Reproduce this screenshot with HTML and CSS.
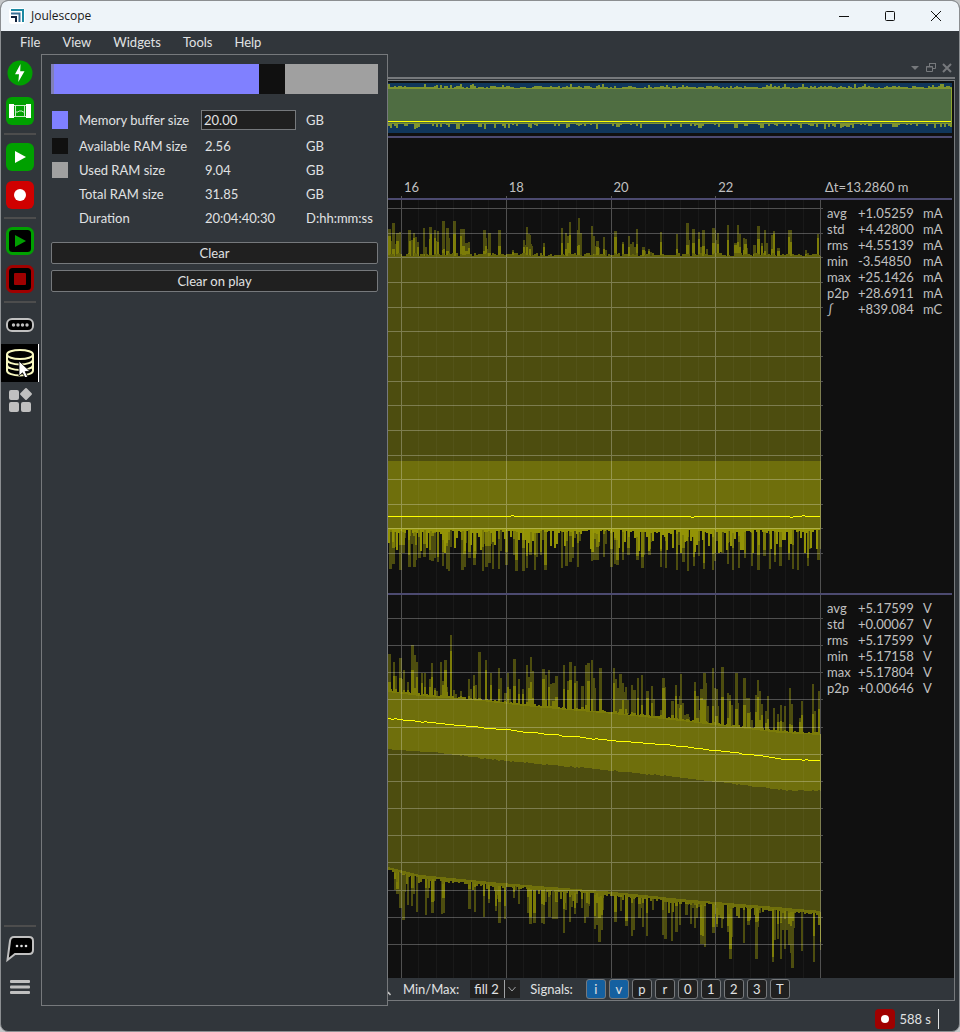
FILE: index.html
```
<!DOCTYPE html>
<html lang="en">

<head>
    <meta charset="UTF-8">
    <meta name="viewport" content="width=device-width, initial-scale=1.0">
    <title>Joulescope</title>
    <link rel="stylesheet" href="styles.css">
</head>

<body>
    <div class="window">
        <header class="title-bar">
            <svg class="logo" viewBox="0 0 16 16">
                <rect width="16" height="16" rx="3" fill="#fff" />
                <path d="M2 2h12v12" fill="none" stroke="#1d89a3" stroke-width="2" />
                <path d="M2 5.5h8.5V14" fill="none" stroke="#3a6f95" stroke-width="2" />
                <path d="M2 9h5v5" fill="none" stroke="#10203c" stroke-width="2" />
            </svg>
            <span class="app-name">Joulescope</span>
            <div class="window-btns">
                <button type="button" aria-label="Minimize"><svg viewBox="0 0 12 12"><path d="M1 6.5h10" /></svg></button>
                <button type="button" aria-label="Maximize"><svg viewBox="0 0 12 12"><rect x="1.5" y="1.5" width="9" height="9" rx="1" /></svg></button>
                <button type="button" aria-label="Close"><svg viewBox="0 0 12 12"><path d="M1 1l10 10M11 1L1 11" /></svg></button>
            </div>
        </header>

        <nav class="menu-bar">
            <button type="button">File</button>
            <button type="button">View</button>
            <button type="button">Widgets</button>
            <button type="button">Tools</button>
            <button type="button">Help</button>
        </nav>

        <main class="main">
            <nav class="side-bar">
                <button type="button" class="side-btn" aria-label="Target power">
                    <svg viewBox="0 0 28 28">
                        <circle cx="14" cy="14" r="12.5" fill="#00a000" />
                        <path d="M14.5 5L9 15.2h4L12.3 23 18.5 12.2h-4.3z" fill="#fff" />
                    </svg>
                </button>
                <button type="button" class="side-btn" aria-label="Current range">
                    <svg viewBox="0 0 28 28">
                        <rect width="28" height="28" rx="6" fill="#00a000" />
                        <path d="M3 7h5v14H3zM20 7h5v14h-5z" fill="#fff" />
                        <path d="M8 8.500h12M8 19.500h12M9.500 8v12M18.500 8v12M10 15h2l1-1h3l1 1h2" fill="none" stroke="#c4e8c4" />
                    </svg>
                </button>
                <hr>
                <button type="button" class="side-btn" aria-label="Play">
                    <svg viewBox="0 0 28 28">
                        <rect width="28" height="28" rx="6" fill="#00a000" />
                        <path d="M9 8l11 6-11 6z" fill="#fff" />
                    </svg>
                </button>
                <button type="button" class="side-btn" aria-label="Record">
                    <svg viewBox="0 0 28 28">
                        <rect width="28" height="28" rx="6" fill="#d00000" />
                        <circle cx="14" cy="14" r="6" fill="#fff" />
                    </svg>
                </button>
                <hr>
                <button type="button" class="side-btn" aria-label="Accumulate">
                    <svg viewBox="0 0 28 28">
                        <rect x="1.5" y="1.5" width="25" height="25" rx="5" fill="#000" stroke="#00a000" stroke-width="3" />
                        <path d="M9 8l11 6-11 6z" fill="#00a000" />
                    </svg>
                </button>
                <button type="button" class="side-btn" aria-label="Record statistics">
                    <svg viewBox="0 0 28 28">
                        <rect x="1.5" y="1.5" width="25" height="25" rx="5" fill="#000" stroke="#a00000" stroke-width="3" />
                        <rect x="8" y="8" width="12" height="12" rx="1" fill="#a00000" />
                    </svg>
                </button>
                <hr>
                <button type="button" class="side-btn" aria-label="Device">
                    <svg viewBox="0 0 28 28">
                        <rect x="1" y="8" width="26" height="12" rx="5" fill="#000" stroke="#c0c0c0" stroke-width="2" />
                        <g fill="#c0c0c0">
                            <circle cx="7.5" cy="14" r="1.7" />
                            <circle cx="12" cy="14" r="1.7" />
                            <circle cx="16.5" cy="14" r="1.7" />
                            <circle cx="21" cy="14" r="1.7" />
                        </g>
                    </svg>
                </button>
                <button type="button" class="side-btn active" aria-label="Memory">
                    <svg viewBox="0 0 28 28">
                        <g fill="none" stroke="#f8f8c0" stroke-width="2">
                            <ellipse cx="14" cy="5.5" rx="13" ry="4.5" />
                            <path d="M1 5.500v16c0 6.500 26 6.500 26 0v-16M1 10.500c0 6.500 26 6.500 26 0M1 16c0 6.500 26 6.500 26 0" />
                        </g>
                        <path d="M13 12v15l3.5-3.2 2.6 5.2 2.6-1.2-2.5-5.2 4.6-.4z" fill="#fff" stroke="#000" stroke-width=".8" />
                    </svg>
                </button>
                <button type="button" class="side-btn" aria-label="Widgets">
                    <svg viewBox="0 0 28 28" fill="#c0c0c0">
                        <rect x="3" y="3" width="10" height="10" rx="2" />
                        <rect x="3" y="15" width="10" height="10" rx="2" />
                        <rect x="15" y="15" width="10" height="10" rx="2" />
                        <rect x="15.5" y="2.5" width="9" height="9" rx="1" transform="rotate(45 20 7)" />
                    </svg>
                </button>
                <hr class="push">
                <button type="button" class="side-btn" aria-label="Help">
                    <svg viewBox="0 0 28 28">
                        <path d="M8 2h15q4 0 4 4v9q0 4-4 4H9l-7.500 6L4 6q.5-4 4-4z" fill="#000" stroke="#c0c0c0" stroke-width="2" />
                        <g fill="#e0e0e0">
                            <circle cx="11" cy="11" r="1.3" />
                            <circle cx="15.5" cy="11" r="1.3" />
                            <circle cx="20" cy="11" r="1.3" />
                        </g>
                    </svg>
                </button>
                <button type="button" class="side-btn" aria-label="Settings">
                    <svg viewBox="0 0 28 28" fill="#c0c0c0">
                        <rect x="4" y="7" width="20" height="3" rx="1" />
                        <rect x="4" y="12.5" width="20" height="3" rx="1" />
                        <rect x="4" y="18" width="20" height="3" rx="1" />
                    </svg>
                </button>
            </nav>

            <section class="memory-panel">
                <div class="memory-bar">
                    <div class="part buffer"></div>
                    <div class="part available"></div>
                    <div class="part used"></div>
                </div>
                <div class="memory-grid">
                    <i class="swatch buffer"></i>
                    <label for="buffer-size">Memory buffer size</label>
                    <input type="text" id="buffer-size" value="20.00">
                    <span>GB</span>

                    <i class="swatch available"></i>
                    <span>Available RAM size</span>
                    <span class="value">2.56</span>
                    <span>GB</span>

                    <i class="swatch used"></i>
                    <span>Used RAM size</span>
                    <span class="value">9.04</span>
                    <span>GB</span>

                    <i></i>
                    <span>Total RAM size</span>
                    <span class="value">31.85</span>
                    <span>GB</span>

                    <i></i>
                    <span>Duration</span>
                    <span class="value">20:04:40:30</span>
                    <span>D:hh:mm:ss</span>
                </div>
                <button type="button" class="wide-btn">Clear</button>
                <button type="button" class="wide-btn">Clear on play</button>
            </section>

            <section class="dock">
                <div class="dock-title">
                    <button type="button" aria-label="Dock menu"><svg viewBox="0 0 12 12"><path d="M2 4h8L6 8z" fill="#76797c" /></svg></button>
                    <button type="button" aria-label="Detach"><svg viewBox="0 0 12 12"><path d="M4.5 4V1.500h6v5H8M4 1.500h7M1.500 4.500h6v5h-6zM1 5h7" fill="none" stroke="#76797c" /></svg></button>
                    <button type="button" aria-label="Close dock"><svg viewBox="0 0 12 12"><path d="M2 2l8 8M10 2l-8 8" fill="none" stroke="#76797c" stroke-width="2" /></svg></button>
                </div>
                <div class="dock-body">
                    <div class="chart">
                        <svg class="overview" id="overview" viewBox="0 0 564 50" preserveAspectRatio="none"></svg>
                        <div class="chart-row axis">
                            <div class="ticks">
                                <span>16</span>
                                <span>18</span>
                                <span>20</span>
                                <span>22</span>
                            </div>
                            <div class="delta">Δt=13.2860 m</div>
                        </div>
                        <div class="chart-row current">
                            <svg class="plot" id="current" viewBox="0 0 435 393" preserveAspectRatio="none"></svg>
                            <table class="stats">
                                <tr><th>avg</th><td>+1.05259</td><td>mA</td></tr>
                                <tr><th>std</th><td>+4.42800</td><td>mA</td></tr>
                                <tr><th>rms</th><td>+4.55139</td><td>mA</td></tr>
                                <tr><th>min</th><td>-3.54850</td><td>mA</td></tr>
                                <tr><th>max</th><td>+25.1426</td><td>mA</td></tr>
                                <tr><th>p2p</th><td>+28.6911</td><td>mA</td></tr>
                                <tr><th>∫</th><td>+839.084</td><td>mC</td></tr>
                            </table>
                        </div>
                        <div class="chart-row voltage">
                            <svg class="plot" id="voltage" viewBox="0 0 435 382" preserveAspectRatio="none"></svg>
                            <table class="stats">
                                <tr><th>avg</th><td>+5.17599</td><td>V</td></tr>
                                <tr><th>std</th><td>+0.00067</td><td>V</td></tr>
                                <tr><th>rms</th><td>+5.17599</td><td>V</td></tr>
                                <tr><th>min</th><td>+5.17158</td><td>V</td></tr>
                                <tr><th>max</th><td>+5.17804</td><td>V</td></tr>
                                <tr><th>p2p</th><td>+0.00646</td><td>V</td></tr>
                            </table>
                        </div>
                    </div>
                    <div class="plot-tools">
                        <svg class="zoom-tail" viewBox="0 0 4 20"><path d="M0 13l2.500 3" stroke="#c0c0c0" stroke-width="1.5" /></svg>
                        <label for="min-max">Min/Max:</label>
                        <div class="select-box">
                            <select id="min-max">
                                <option>off</option>
                                <option>lines</option>
                                <option>fill 1</option>
                                <option selected>fill 2</option>
                            </select>
                            <svg viewBox="0 0 16 18"><path d="M.5 0v18" /><path d="M4.500 7l3.500 4 3.500-4" /></svg>
                        </div>
                        <span>Signals:</span>
                        <div class="signals">
                            <button type="button" class="on">i</button>
                            <button type="button" class="on">v</button>
                            <button type="button">p</button>
                            <button type="button">r</button>
                            <button type="button">0</button>
                            <button type="button">1</button>
                            <button type="button">2</button>
                            <button type="button">3</button>
                            <button type="button">T</button>
                        </div>
                    </div>
                </div>
            </section>
        </main>

        <footer class="status-bar">
            <svg viewBox="0 0 20 20">
                <rect width="20" height="20" rx="4" fill="#a00000" />
                <circle cx="10" cy="10" r="4" fill="#fff" />
            </svg>
            <span class="record-time">588 s</span>
        </footer>
    </div>

    <script src="plots.js"></script>
</body>

</html>
```
FILE: styles.css
```
* {
    box-sizing: border-box;
}

body {
    margin: 0;
    height: 100vh;
    background-color: #c4c6c8;
    color: #e0e2e3;
    font-family: Lato, "Liberation Sans", sans-serif;
    font-size: 13px;
    line-height: 16px;
}

button,
input,
select {
    font: inherit;
    color: inherit;
    margin: 0;
    padding: 0;
    border: none;
    background: none;
}

svg {
    display: block;
}

.window {
    height: 100%;
    display: flex;
    flex-direction: column;
    background-color: #31363b;
    border: 1px solid #8b8e91;
    border-radius: 8px;
    overflow: hidden;
}

/* title bar */
.title-bar {
    height: 30px;
    display: flex;
    align-items: center;
    gap: 6px;
    padding-left: 8px;
    background-color: #eef4f9;
    color: #1a1a1a;
    font-family: "Open Sans", sans-serif;
    font-size: 12px;
}

.logo {
    width: 16px;
    height: 16px;
}

.window-btns {
    margin-left: auto;
    display: flex;
}

.window-btns button {
    width: 46px;
    height: 30px;
    display: flex;
    justify-content: center;
    align-items: center;
}

.window-btns svg {
    width: 12px;
    height: 12px;
    fill: none;
    stroke: #111;
}

/* menu */
.menu-bar {
    height: 23px;
    display: flex;
    padding: 0 0 2px 11px;
}

.menu-bar button {
    padding: 0 8px;
    margin-right: 6px;
}

.main {
    flex: 1;
    min-height: 0;
    display: flex;
}

/* side bar */
.side-bar {
    width: 40px;
    flex: none;
    display: flex;
    flex-direction: column;
}

.side-bar hr {
    width: 32px;
    height: 2px;
    margin: 3px;
    border: none;
    background-color: #4d4d4d;
    flex: none;
}

.side-bar .push {
    margin-top: auto;
}

.side-btn {
    width: 38px;
    height: 38px;
    padding: 5px;
    flex: none;
}

.side-btn svg {
    width: 28px;
    height: 28px;
}

.side-btn.active {
    background-color: #000;
    box-shadow: inset -1px 0 #fff;
}

/* memory panel */
.memory-panel {
    width: 347px;
    flex: none;
    padding: 9px;
    border: 1px solid #76797c;
}

.memory-bar {
    height: 30px;
    display: flex;
    margin-bottom: 16px;
    border-left: 3px solid #8080b8;
}

.part.buffer {
    flex: 205;
}

.part.available {
    flex: 26;
}

.part.used {
    flex: 93;
}

.buffer {
    background-color: #8080ff;
}

.available {
    background-color: #101010;
}

.used {
    background-color: #a0a0a0;
}

.memory-grid {
    display: grid;
    grid-template-columns: 17px 112px 95px 1fr;
    grid-template-rows: 20px;
    grid-auto-rows: 16px;
    gap: 8px 10px;
    align-items: center;
    padding-left: 1px;
    margin-bottom: 16px;
    white-space: nowrap;
}

.swatch {
    width: 16px;
    height: 16px;
}

.swatch.buffer {
    height: 18px;
}

.memory-grid input {
    width: 100%;
    height: 20px;
    padding: 0 2px;
    border: 1px solid #76797c;
    background-color: #202020;
}

.value {
    padding-left: 4px;
}

.wide-btn {
    display: block;
    width: 100%;
    height: 22px;
    margin-bottom: 6px;
    border: 1px solid #76797c;
    border-radius: 2px;
    background-color: #202020;
}

/* dock with the plots */
.dock {
    flex: 1;
    min-width: 0;
    display: flex;
    flex-direction: column;
    padding: 0 4px 5px 0;
}

.dock-title {
    height: 25px;
    flex: none;
    display: flex;
    justify-content: flex-end;
    align-items: flex-start;
    gap: 4px;
    padding: 8px 2px 0 0;
    border-bottom: 2px solid #76797c;
}

.dock-title svg {
    width: 12px;
    height: 12px;
}

.dock-body {
    flex: 1;
    min-height: 0;
    display: flex;
    flex-direction: column;
    margin-top: 1px;
    border: 1px solid #76797c;
    border-left: none;
}

.chart {
    flex: 1;
    min-height: 0;
    display: flex;
    flex-direction: column;
    padding: 2px 2px 0 0;
    background-color: #101010;
    color: #c0c0c0;
}

.overview {
    width: 100%;
    height: 50px;
    flex: none;
    margin-bottom: 3px;
    background-color: #10365a;
}

.chart-row {
    display: grid;
    grid-template-columns: 1fr 129px;
    grid-template-rows: 100%;
    border-top: 2px solid #4c4a70;
    min-height: 0;
}

.axis {
    height: 62px;
    flex: none;
    align-items: end;
}

.current {
    flex: 395;
}

.voltage {
    flex: 384;
}

.ticks {
    display: flex;
    align-self: end;
    padding: 0 3px 0 13px;
}

.ticks span {
    flex: 1;
    height: 19px;
    padding-left: 2px;
    border-left: 1px solid;
    border-image: linear-gradient(transparent 16px, #5a5a5a 16px) 1;
}

.delta {
    height: 19px;
    padding-left: 2px;
}

.plot {
    width: 100%;
    height: 100%;
    shape-rendering: crispEdges;
}

.stats {
    align-self: start;
    justify-self: start;
    margin: 5px 0 0 4px;
    border-collapse: collapse;
}

.stats th,
.stats td {
    padding: 0;
    text-align: left;
    font-weight: normal;
}

.stats th {
    width: 31px;
}

.stats td:nth-child(2) {
    width: 65px;
}

/* tools under the plots */
.plot-tools {
    height: 22px;
    flex: none;
    display: flex;
    align-items: center;
}

.zoom-tail {
    width: 4px;
    height: 20px;
    margin-right: 11px;
}

.select-box {
    position: relative;
    width: 50px;
    height: 18px;
    margin: 0 10px 0 11px;
    background-color: #202020;
}

.select-box select {
    appearance: none;
    width: 100%;
    height: 18px;
    padding-left: 4px;
}

.select-box svg {
    position: absolute;
    top: 0;
    right: 0;
    width: 16px;
    height: 18px;
    fill: none;
    stroke: #a0a2a4;
    pointer-events: none;
}

.signals {
    display: flex;
    gap: 3px;
    margin-left: 13px;
}

.signals button {
    width: 20px;
    height: 20px;
    border: 1px solid #76797c;
    border-radius: 3px;
    background-color: #202020;
}

.signals .on {
    background-color: #1460a0;
}

/* status bar */
.status-bar {
    height: 25px;
    flex: none;
    display: flex;
    justify-content: flex-end;
    align-items: center;
    gap: 4px;
    padding-right: 20px;
}

.status-bar svg {
    width: 20px;
    height: 20px;
}

.record-time {
    padding: 2px 7px 2px 0;
    border-right: 1px solid #e0e2e3;
}
```
FILE: plots.js
```
const DARK = '#4d4d0f';
const MID = '#6f6f0c';
const BRIGHT = '#7c7c08';
const EDGE = '#939306';

// peaks as [x, y] in plot units
const currentTop = [
    [0, 29], [4, 23], [8, 33], [11, 32], [20, 30], [21, 30], [25, 33], [27, 37], [29, 42], [35, 28],
    [41, 27], [42, 27], [46, 30], [49, 31], [54, 21], [55, 21], [58, 28], [65, 21], [72, 29], [74, 29],
    [77, 43], [80, 42], [95, 30], [97, 38], [100, 33], [110, 30], [124, 50], [135, 40], [138, 27],
    [140, 34], [141, 35], [142, 44], [155, 43], [173, 28], [177, 33], [179, 36], [181, 22], [189, 30],
    [190, 18], [203, 26], [205, 36], [208, 41], [215, 37], [226, 31], [234, 42], [240, 36], [244, 42],
    [248, 29], [254, 47], [260, 49], [272, 32], [288, 34], [298, 23], [304, 29], [310, 32], [314, 30],
    [318, 49], [324, 28], [326, 30], [329, 33], [339, 25], [346, 43], [349, 25], [350, 34], [355, 38],
    [356, 39], [365, 45], [369, 26], [373, 43], [376, 30], [383, 35], [385, 31], [389, 48], [400, 30],
    [402, 30], [417, 50], [429, 34]
];

const currentBottom = [
    [1, 369], [4, 364], [11, 370], [14, 353], [20, 367], [21, 367], [25, 367], [27, 360], [30, 358],
    [35, 357], [41, 360], [43, 361], [46, 358], [49, 362], [54, 366], [58, 369], [60, 371], [73, 370],
    [75, 367], [80, 358], [85, 365], [94, 371], [97, 367], [100, 363], [104, 369], [110, 369], [117, 365],
    [125, 355], [127, 371], [134, 371], [138, 368], [141, 355], [146, 370], [152, 355], [156, 370],
    [173, 368], [177, 366], [181, 362], [184, 358], [189, 367], [203, 361], [205, 360], [208, 360],
    [215, 357], [222, 367], [226, 364], [228, 365], [234, 360], [239, 355], [248, 360], [253, 368],
    [260, 355], [272, 367], [277, 368], [288, 370], [294, 362], [299, 371], [305, 366], [310, 356],
    [315, 369], [324, 370], [326, 361], [333, 353], [339, 364], [344, 370], [350, 368], [356, 358],
    [363, 366], [369, 370], [375, 356], [381, 369], [386, 362], [391, 366], [400, 360], [404, 369],
    [409, 370], [416, 352], [419, 366], [429, 360]
];

const voltageTop = [
    [0, 59], [5, 67], [7, 82], [11, 63], [12, 63], [15, 75], [19, 87], [23, 50], [25, 60], [28, 67],
    [33, 78], [36, 78], [41, 84], [43, 68], [46, 93], [52, 67], [54, 86], [56, 65], [58, 92], [62, 40],
    [65, 95], [72, 96], [80, 84], [85, 80], [90, 57], [97, 65], [102, 78], [110, 73], [116, 98],
    [119, 78], [125, 64], [130, 84], [134, 94], [138, 70], [140, 82], [142, 62], [144, 76], [154, 74],
    [156, 80], [160, 75], [164, 88], [167, 81], [175, 70], [179, 86], [181, 67], [186, 71], [193, 91],
    [197, 70], [199, 68], [203, 65], [206, 93], [211, 73], [225, 73], [226, 84], [229, 93], [231, 79],
    [234, 88], [237, 92], [243, 90], [245, 95], [249, 83], [253, 80], [258, 96], [263, 91], [272, 115],
    [274, 83], [276, 92], [283, 106], [287, 90], [291, 101], [292, 79], [294, 108], [298, 119],
    [306, 87], [308, 101], [312, 94], [315, 78], [317, 88], [324, 73], [326, 93], [327, 94], [333, 72],
    [339, 98], [341, 100], [347, 78], [355, 83], [359, 103], [361, 119], [367, 100], [369, 85],
    [371, 96], [373, 109], [377, 116], [379, 101], [385, 113], [389, 119], [392, 110], [396, 111],
    [401, 93], [403, 109], [411, 123], [413, 106], [424, 89], [430, 96]
];

const voltageBottom = [
    [6, 295], [8, 299], [11, 313], [14, 325], [19, 310], [23, 311], [28, 317], [37, 320], [43, 318],
    [53, 319], [54, 318], [80, 314], [86, 317], [95, 322], [100, 308], [107, 316], [110, 328],
    [116, 324], [125, 303], [130, 309], [139, 318], [141, 329], [145, 328], [153, 328], [155, 329],
    [160, 322], [164, 324], [167, 324], [175, 338], [181, 327], [186, 319], [193, 313], [196, 328],
    [198, 322], [206, 334], [208, 330], [210, 347], [212, 335], [226, 327], [232, 316], [237, 331],
    [243, 341], [245, 335], [250, 323], [254, 332], [258, 341], [264, 315], [274, 340], [276, 344],
    [283, 346], [287, 337], [291, 330], [297, 320], [302, 329], [306, 333], [308, 323], [312, 349],
    [314, 349], [316, 352], [324, 338], [328, 332], [333, 333], [339, 337], [341, 364], [355, 348],
    [359, 330], [361, 325], [367, 364], [369, 332], [384, 367], [389, 344], [392, 364], [396, 354],
    [400, 350], [402, 358], [403, 372], [404, 348], [413, 356], [425, 367], [430, 330], [432, 355]
];

// same noise on each load
let seed = 7;
function rand() {
    seed = (seed * 16807) % 2147483647;
    return seed / 2147483647;
}

// straight segments through the [x, y] points
function lineAt(points, x) {
    for (let i = 1; i < points.length; i++) {
        const [x0, y0] = points[i - 1];
        const [x1, y1] = points[i];
        if (x <= x1) {
            return y0 + (y1 - y0) * (x - x0) / (x1 - x0);
        }
    }
    return points[points.length - 1][1];
}

function bar(x, y0, y1, w = 2) {
    return `M${x} ${Math.round(y0)}h${w}V${Math.round(y1)}h${-w}z`;
}

function fill(d, color) {
    return `<path d="${d}" fill="${color}"/>`;
}

function spikes(peaks, edge, inner) {
    let far = '';
    let near = '';
    peaks.forEach(([x, y]) => {
        const base = lineAt(edge, x);
        const w = Math.min(rand() < .4 ? 3 : 2, 433 - x);
        far += bar(x, base, y, w);
        // a lower shoulder beside some of the peaks
        if (rand() < .4 && x < 430) {
            far += bar(x + 2, base, base + (y - base) * (.3 + rand() * .4));
        }
        near += bar(x, base, base + (y - base) * rand() * inner, w);
    });
    return fill(far, DARK) + fill(near, BRIGHT);
}

function band(top, bottom, color) {
    let d = '';
    for (let x = 0; x < 433; x++) {
        d += bar(x, lineAt(top, x), lineAt(bottom, x), 1);
    }
    return fill(d, color);
}

// small noise along an edge
function fringe(edge, size, dir, color) {
    let d = '';
    for (let x = 0; x < 432; x += 2) {
        const y = lineAt(edge, x);
        d += bar(x, y + dir * rand() * size, y - dir);
    }
    return fill(d, color);
}

// thin ragged outline, with gaps of background between the teeth
function teeth(edge, short, long, chance, color) {
    let d = '';
    for (let x = 0; x < 432; x += 2) {
        const y = lineAt(edge, x);
        d += bar(x, y - 1, y + 1 + rand() * (rand() < chance ? long : short));
    }
    return fill(d, color);
}

function trace(points, jitter) {
    let d = '';
    for (let x = 0; x < 432; x += 3) {
        const y = Math.round(lineAt(points, x) + (rand() - .5) * jitter);
        d += `M${x} ${y}h3v1h-3z`;
    }
    return fill(d, '#ffff00');
}

function grid(first, step, last, height) {
    let minor = '';
    let major = '';
    for (let i = -1; i < 24; i++) {
        const x = Math.round(13 + i * 17.46);
        if (i % 6 === 0) {
            major += bar(x, 0, height, 1);
        } else if (x >= 0) {
            minor += bar(x, 0, height, 1);
        }
    }
    major += bar(432, 0, height, 1);
    for (let y = first; y < last; y += step) {
        major += `M0 ${Math.round(y)}h435v1H0z`;
    }
    return fill(minor, 'rgba(255,255,255,.04)') + fill(major, 'rgba(255,255,255,.27)');
}

function drawCurrent() {
    const top = [[0, 56], [433, 56]];
    const middle = [[0, 261], [433, 261]];
    const bottom = [[0, 329], [433, 329]];
    document.getElementById('current').innerHTML =
        band(top, middle, DARK) +
        band(middle, bottom, MID) +
        spikes(currentTop, top, .9) +
        fringe(top, 3, -1, '#64640b') +
        spikes(currentBottom, bottom, .9) +
        teeth(bottom, 3, 24, .5, EDGE) +
        grid(8, 24.65, 360, 393) +
        trace([[0, 316], [433, 316]], 1.02);
}

function drawVoltage() {
    const top = [[0, 96], [30, 100], [92, 105], [145, 111], [225, 118], [292, 125], [392, 137], [433, 139]];
    const avg = [[0, 123], [92, 132], [212, 144], [292, 151], [400, 164], [433, 165]];
    const middle = [[0, 155], [47, 158], [112, 166], [212, 175], [292, 183], [400, 196], [433, 196]];
    const bottom = [[0, 273], [32, 281], [112, 289], [225, 298], [292, 305], [375, 312], [433, 317]];
    document.getElementById('voltage').innerHTML =
        band(top, middle, MID) +
        band(middle, bottom, DARK) +
        spikes(voltageTop, top, .8) +
        fringe(top, 2, -1, BRIGHT) +
        fringe(middle, 1, -1, DARK) +
        spikes(voltageBottom, bottom, .9) +
        teeth(bottom, 3, 15, .25, '#70700a') +
        grid(23, 27.15, 360, 382) +
        trace(avg, .8);
}

function drawOverview() {
    let high = '';
    let low = '';
    for (let x = 0; x < 564; x += 2) {
        high += bar(x, 6, rand() < .25 ? 5 - rand() * 4 : 5 - rand() * 2);
        low += bar(x, 40, rand() < .4 ? 42 + rand() * 4 : 41);
    }
    document.getElementById('overview').innerHTML =
        fill('M0 5h564v36H0z', '#4f6d42') +
        fill(high, '#7f942f') +
        fill(low, '#7f942f') +
        fill('M0 38h564v1H0z', '#ffff00') +
        fill('M563 5h1v36h-1z', '#8fa52f');
}

drawOverview();
drawCurrent();
drawVoltage();
```
